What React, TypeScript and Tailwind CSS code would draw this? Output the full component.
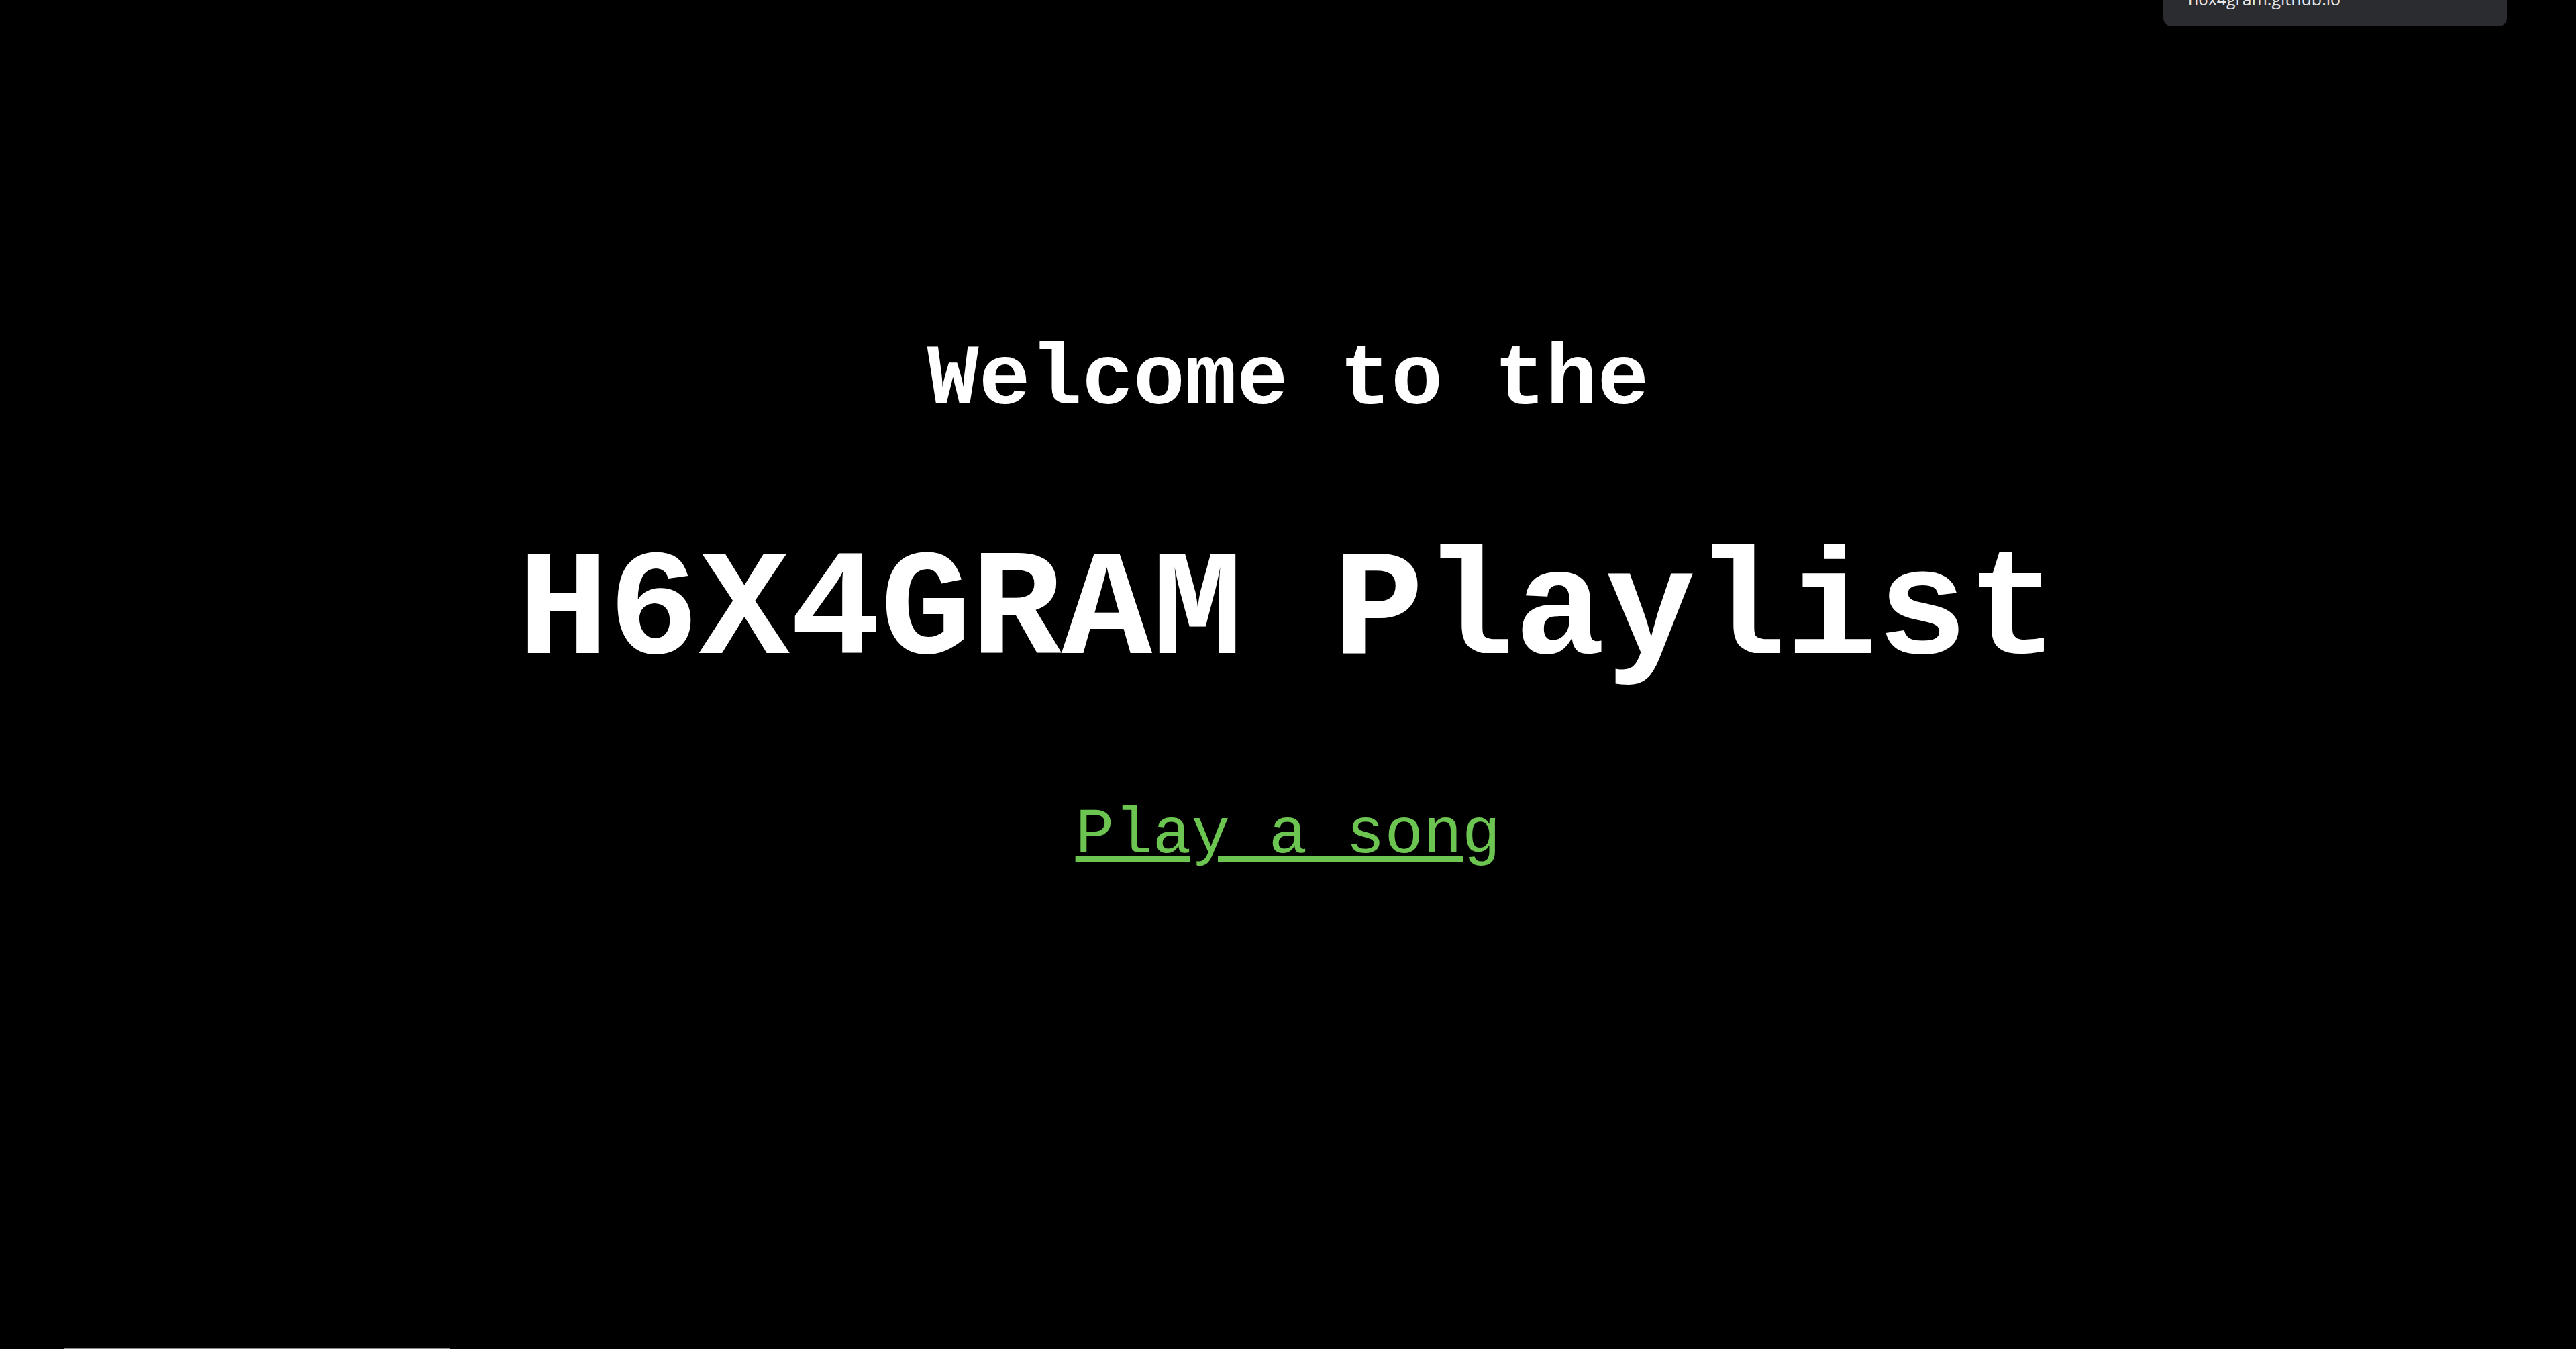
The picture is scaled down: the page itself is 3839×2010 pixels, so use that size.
const mono = "font-['Liberation_Mono','Courier_New',monospace]";

export default function App() {
  return (
    <div className="relative h-[2010px] w-full overflow-hidden bg-black">
      <main className={`flex flex-col items-center pt-[503px] text-white ${mono}`}>
        <h2 className="text-[128px] font-bold leading-none">Welcome to the</h2>
        <h1 className="mt-[170px] text-[225px] font-bold leading-none">H6X4GRAM Playlist</h1>
        <a
          href="#"
          className="mt-[171px] text-[96px] leading-none text-[#6cc551] underline decoration-[#6cc551] decoration-[9px] underline-offset-[5px]"
        >
          Play a song
        </a>
      </main>

      {/* link hover status bubble */}
      <div className="absolute right-[103px] top-0 h-[39px] w-[512px] overflow-hidden rounded-b-[12px] bg-[#2b2c30]">
        <span className="absolute left-[37px] top-[-20px] font-['Open_Sans',sans-serif] text-[25px] text-[#e6e6e6]">
          h6x4gram.github.io
        </span>
      </div>

      <div className="absolute bottom-0 left-[96px] h-[2px] w-[575px] bg-[#8a8a8a]" />
    </div>
  );
}
